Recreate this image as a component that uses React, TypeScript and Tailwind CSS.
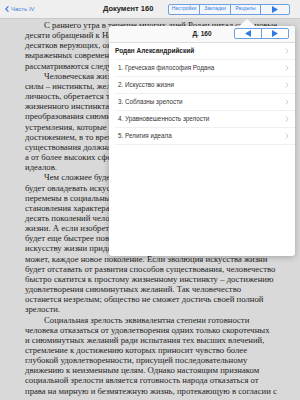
const serif = { fontFamily: '"Liberation Serif", "Times New Roman", serif' };

type Line = { text: string; indent?: boolean };

const lines: Line[] = [
  { text: "С раннего утра в течение многих дней Родан читал свои новые", indent: true },
  { text: "десяти обращений к Натанаилу, Фоме и группе из нескольких" },
  { text: "десятков верующих, он изложил идеи, которые в понятиях," },
  { text: "выраженных современным языком, могут быть представлены и" },
  { text: "рассматриваются следующим образом:" },
  { text: "Человеческая жизнь, что бы она ни представляла, имеет", indent: true },
  { text: "силы – инстинкты, желания и побуждения. Полноценная зрелая" },
  { text: "личность, обретается тем, кто сумел превзойти состояние" },
  { text: "жизненного инстинкта путем постепенного и разумного" },
  { text: "преобразования сиюминутных желаний в более высокие" },
  { text: "устремления, которые находят удовлетворение не в одном" },
  { text: "достижением, в то время как зрелая цель человеческого" },
  { text: "существования должна происходить не от низших побуждений," },
  { text: "а от более высоких сфер духовных ценностей и вечных" },
  { text: "идеалов." },
  { text: "Чем сложнее будет становиться цивилизация, тем труднее", indent: true },
  { text: "будет овладевать искусством жизни. Чем стремительнее будут" },
  { text: "перемены в социальных обычаях, тем сложнее будет задача" },
  { text: "становления характера. Человечество должно каждые" },
  { text: "десять поколений человеческого рода постигать новое искусство" },
  { text: "жизни. А если изобретательность человека станет умножаться," },
  { text: "будет еще быстрее повышаться и требование к новому" },
  { text: "искусству жизни приданию, которое должно осваивать, может" },
  { text: "может, каждое новое поколение. Если эволюция искусства жизни" },
  { text: "будет отставать от развития способов существования, человечество" },
  { text: "быстро скатится к простому жизненному инстинкту – достижению" },
  { text: "удовлетворения сиюминутных желаний. Так человечество" },
  { text: "останется незрелым; общество не сможет достичь своей полной" },
  { text: "зрелости." },
  { text: "Социальная зрелость эквивалентна степени готовности", indent: true },
  { text: "человека отказаться от удовлетворения одних только скоротечных" },
  { text: "и сиюминутных желаний ради испытания тех высших влечений," },
  { text: "стремление к достижению которых приносит чувство более" },
  { text: "глубокой удовлетворенности, присущей последовательному" },
  { text: "движению к неизменным целям. Однако настоящим признаком" },
  { text: "социальной зрелости является готовность народа отказаться от" },
  { text: "права на мирную и безмятежную жизнь, протекающую в согласии с" },
];

const sections = [
  "1. Греческая философия Родана",
  "2. Искусство жизни",
  "3. Соблазны зрелости",
  "4. Уравновешенность зрелости",
  "5. Религия идеала",
];

function Triangle({ dir }: { dir: "left" | "right" }) {
  return (
    <svg width="6" height="7" viewBox="0 0 6 7">
      {dir === "right" ? (
        <path d="M0 0 L6 3.5 L0 7 Z" fill="#2f7be6" />
      ) : (
        <path d="M6 0 L0 3.5 L6 7 Z" fill="#2f7be6" />
      )}
    </svg>
  );
}

function Chevron() {
  return (
    <svg width="4" height="6" viewBox="0 0 4 6">
      <path d="M0.6 0.5 L3.2 3 L0.6 5.5" fill="none" stroke="#c4c4c8" strokeWidth="0.9" />
    </svg>
  );
}

export default function App() {
  const sans = { fontFamily: '"Liberation Sans", Arial, sans-serif' };

  return (
    <div className="relative h-[400px] w-[300px] overflow-hidden bg-[#d9d9d9]">
      <div
        className="flex h-[19px] items-center border-b border-[#c9c9c9] bg-[#efefef] pl-[5px] pr-[10px]"
        style={sans}
      >
        <div className="flex w-[98px] items-center gap-[2px] text-[6px] text-[#3a7fe0]">
          <svg width="4" height="6" viewBox="0 0 4 6">
            <path d="M3.4 0.4 L0.8 3 L3.4 5.6" fill="none" stroke="#3a7fe0" strokeWidth="1.2" />
          </svg>
          <span>Часть IV</span>
        </div>
        <span className="text-[7.5px] font-bold text-[#222]">Документ 160</span>
        <div className="ml-auto flex h-[11px] overflow-hidden rounded-[2px] border border-[#6f9fe0] bg-[#f3f6fb] text-[5px] text-[#3a7fe0]">
          <span className="flex w-[31px] items-center justify-center border-r border-[#6f9fe0]">Настройки</span>
          <span className="flex w-[31px] items-center justify-center border-r border-[#6f9fe0]">Закладки</span>
          <span className="flex w-[30px] items-center justify-center border-r border-[#6f9fe0]">Разделы</span>
          <span className="flex w-[28px] items-center justify-center">
            <Triangle dir="right" />
          </span>
        </div>
      </div>

      <div className="pl-[25px] pt-[1px] text-[8.7px] leading-[10.15px] text-[#1f1f1f]" style={serif}>
        {lines.map((line, i) => (
          <div key={i} className={line.indent ? "whitespace-nowrap pl-[19px]" : "whitespace-nowrap"}>
            {line.text}
          </div>
        ))}
      </div>

      <div className="absolute left-[109px] top-[19px] w-[186px]" style={sans}>
        <svg className="ml-[130px] block" width="16" height="7" viewBox="0 0 16 7">
          <path d="M0 7 L8 0 L16 7 Z" fill="#f9f9f9" />
        </svg>
        <div className="h-[230px] overflow-hidden rounded-[3px] bg-white shadow-[0_1px_6px_rgba(0,0,0,0.25)]">
          <div className="relative flex h-[17px] items-center justify-center border-b border-[#dcdcdc] bg-[#f9f9f9]">
            <span className="text-[6.5px] font-bold text-[#222]">Д. 160</span>
            <div className="absolute right-[6px] top-[2px] flex h-[11px] rounded-[2px] border border-[#6f9fe0] bg-white">
              <span className="flex w-[27px] items-center justify-center border-r border-[#6f9fe0]">
                <Triangle dir="left" />
              </span>
              <span className="flex w-[26px] items-center justify-center">
                <Triangle dir="right" />
              </span>
            </div>
          </div>
          <div className="pl-[6px]">
            <div className="flex h-[17px] items-center justify-between border-b border-[#efefef] pr-[6px]">
              <span className="text-[6.5px] font-bold text-[#222]">Родан Александрийский</span>
              <Chevron />
            </div>
            {sections.map((s) => (
              <div key={s} className="flex h-[17px] items-center justify-between border-b border-[#efefef] pl-[3px] pr-[6px]">
                <span className="text-[6.3px] text-[#333]">{s}</span>
                <Chevron />
              </div>
            ))}
          </div>
        </div>
      </div>
    </div>
  );
}
